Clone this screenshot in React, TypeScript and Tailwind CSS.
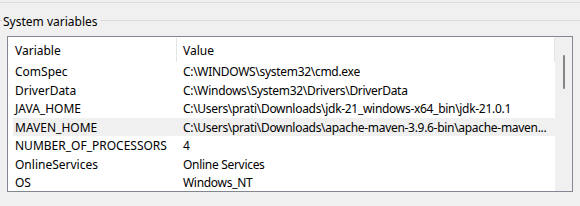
const rows = [
  ['ComSpec', 'C:\\WINDOWS\\system32\\cmd.exe'],
  ['DriverData', 'C:\\Windows\\System32\\Drivers\\DriverData'],
  ['JAVA_HOME', 'C:\\Users\\prati\\Downloads\\jdk-21_windows-x64_bin\\jdk-21.0.1'],
  ['MAVEN_HOME', 'C:\\Users\\prati\\Downloads\\apache-maven-3.9.6-bin\\apache-maven...'],
  ['NUMBER_OF_PROCESSORS', '4'],
  ['OnlineServices', 'Online Services'],
  ['OS', 'Windows_NT'],
];

export default function App() {
  return (
    <div className="w-[580px] h-[206px] overflow-hidden bg-[#f0f0f0] text-[12px] text-black font-['Noto_Sans',sans-serif]">
      <div className="h-[2px]" />
      <div className="h-px bg-[#dcdcdc]" />

      {/* group title */}
      <div className="mt-[9px] flex h-[17px] items-center">
        <div className="h-px w-[2px] bg-[#dcdcdc]" />
        <span className="pl-px pr-[2px] pt-[2px] leading-[17px]">System variables</span>
        <div className="h-px flex-1 bg-[#dcdcdc]" />
      </div>

      {/* list view */}
      <div className="ml-[7px] mt-[7px] flex h-[156px] w-[566px] border border-[#828790] bg-white">
        <div className="flex w-[547px] flex-col overflow-hidden">
          <div className="flex h-[25px] shrink-0 items-center">
            <div className="w-[168px] shrink-0 pl-[7px] pt-[3px]">Variable</div>
            <div className="mt-px h-[24px] w-px shrink-0 self-end bg-[#e5e5e5]" />
            <div className="flex-1 pl-[6px] pt-[3px]">Value</div>
            <div className="mt-px h-[24px] w-px shrink-0 self-end bg-[#e5e5e5]" />
          </div>
          {rows.map(([name, value]) => (
            <div
              key={name}
              className={`ml-[5px] flex h-[18.5px] shrink-0 items-center whitespace-nowrap pt-[2px] ${
                name === 'MAVEN_HOME' ? 'bg-[#f0f0f0]' : ''
              }`}
            >
              <div className="w-[170px] shrink-0 pl-[2px]">{name}</div>
              <div className="min-w-0 flex-1 truncate pr-[6px] tracking-[-0.3px]">{value}</div>
            </div>
          ))}
        </div>
        <div className="w-[17px] shrink-0 bg-[#f0f0f0] pt-[18px]">
          <div className="ml-[8px] h-[34px] w-[2px] rounded-full bg-[#858585]" />
        </div>
      </div>
    </div>
  );
}
